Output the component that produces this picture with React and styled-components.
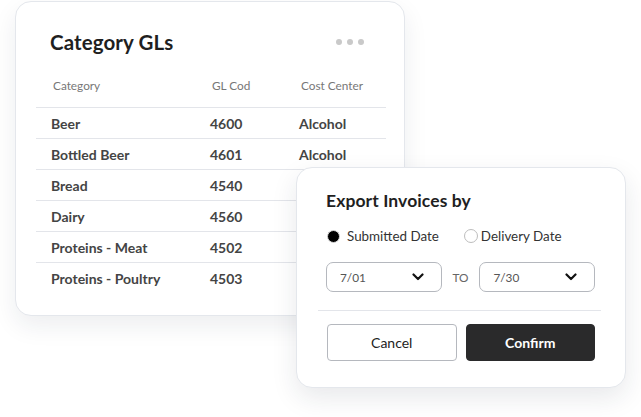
import React from "react";
import styled, { createGlobalStyle } from "styled-components";

const Global = createGlobalStyle`
  html, body { margin: 0; padding: 0; background: #ffffff; }
  body { font-family: "Lato", "Liberation Sans", sans-serif; -webkit-font-smoothing: antialiased; }
  * { box-sizing: border-box; }
`;

const Stage = styled.div`
  position: relative;
  width: 641px;
  height: 417px;
  padding: 1px 0 0 15px;
`;

const Card = styled.div`
  background: #fff;
  border: 1px solid #e4e7ec;
  border-radius: 16px;
  box-shadow: 0 10px 24px rgba(30, 40, 60, 0.08);
`;

const GLCard = styled(Card)`
  width: 390px;
  height: 315px;
  padding: 27px 0 0 0;
`;

const TitleBar = styled.div`
  display: flex;
  align-items: center;
  justify-content: space-between;
  padding: 0 40px 0 34px;
  height: 26px;
`;

const Title = styled.h2`
  margin: 0;
  font-size: ${p => p.$size || 20.5}px;
  font-weight: 700;
  color: #1f1f1f;
  letter-spacing: 0.1px;
`;

const Dots = styled.div`
  display: flex;
  gap: 5px;
`;

const Dot = styled.span`
  width: 6px;
  height: 6px;
  border-radius: 50%;
  background: #c9c9c9;
`;

const Table = styled.div`
  margin: 18px 18px 0 20px;
`;

const Row = styled.div`
  display: grid;
  grid-template-columns: 159px 89px 1fr;
  align-items: center;
  height: ${p => (p.$head ? 35 : 31)}px;
  padding-bottom: ${p => (p.$head ? 10 : 0)}px;
  border-bottom: ${p => (p.$last ? "none" : "1px solid #e3e5ea")};
`;

const Cell = styled.div`
  padding-left: ${p => (p.$head ? 17 : 15)}px;
  font-size: ${p => (p.$head ? 11.8 : 14)}px;
  font-weight: ${p => (p.$head ? 400 : 700)};
  color: ${p => (p.$head ? "#777" : "#444")};
  white-space: nowrap;
`;

const ExportCard = styled(Card)`
  position: absolute;
  left: 296px;
  top: 167px;
  width: 330px;
  height: 221px;
  padding: 22px 0 0 0;
  box-shadow: 0 10px 26px rgba(30, 40, 60, 0.1);
`;

const Inner = styled.div`
  padding: 0 30px 0 29px;
`;

const RadioRow = styled.div`
  display: flex;
  align-items: center;
  margin-top: 16px;
  height: 18px;
  padding-left: 1px;
`;

const RadioOption = styled.label`
  display: flex;
  align-items: center;
  gap: ${p => p.$gap}px;
  margin-right: ${p => p.$mr || 0}px;
  font-size: 13.4px;
  color: #333;
`;

const RadioDot = styled.span`
  width: ${p => (p.$on ? 13 : 14)}px;
  height: ${p => (p.$on ? 13 : 14)}px;
  border-radius: 50%;
  border: ${p => (p.$on ? "1.5px solid #d8d8d8" : "1px solid #bdbdbd")};
  background: ${p => (p.$on ? "#000" : "#fff")};
  box-shadow: ${p => (p.$on ? "inset 0 0 0 0.5px #000" : "none")};
`;

const Range = styled.div`
  display: flex;
  align-items: center;
  margin-top: 17px;
`;

const Select = styled.div`
  width: 116px;
  height: 30px;
  border: 1px solid #b5b8be;
  border-radius: 7px;
  display: flex;
  align-items: center;
  justify-content: space-between;
  padding: 0 17px 0 13px;
  font-size: 11.8px;
  color: #555;
`;

const To = styled.span`
  width: 38px;
  text-align: center;
  font-size: 11.8px;
  color: #666;
`;

const Divider = styled.div`
  height: 1px;
  background: #e3e5ea;
  margin: 18px 24px 0 21px;
`;

const Buttons = styled.div`
  display: flex;
  gap: 9px;
  margin-top: 13px;
  padding-left: 1px;
`;

const Button = styled.button`
  width: 131px;
  height: 37px;
  border-radius: 4px;
  font-family: inherit;
  font-size: 14px;
  font-weight: ${p => (p.$primary ? 700 : 400)};
  color: ${p => (p.$primary ? "#fff" : "#222")};
  background: ${p => (p.$primary ? "#2a2a2b" : "#fff")};
  border: 1px solid ${p => (p.$primary ? "#2a2a2b" : "#b5b8be")};
`;

const Chevron = () => (
  <svg width="12" height="8" viewBox="0 0 12 8" fill="none">
    <path d="M1.5 1.5 L6 6 L10.5 1.5" stroke="#111" strokeWidth="2.2" strokeLinecap="round" strokeLinejoin="round" />
  </svg>
);

const rows = [
  ["Beer", "4600", "Alcohol"],
  ["Bottled Beer", "4601", "Alcohol"],
  ["Bread", "4540", ""],
  ["Dairy", "4560", ""],
  ["Proteins - Meat", "4502", ""],
  ["Proteins - Poultry", "4503", ""],
];

export default function App() {
  return (
    <>
      <Global />
      <Stage>
        <GLCard>
          <TitleBar>
            <Title>Category GLs</Title>
            <Dots>
              <Dot />
              <Dot />
              <Dot />
            </Dots>
          </TitleBar>
          <Table>
            <Row $head>
              <Cell $head>Category</Cell>
              <Cell $head>GL Cod</Cell>
              <Cell $head>Cost Center</Cell>
            </Row>
            {rows.map((r, i) => (
              <Row key={r[0]} $last={i === rows.length - 1}>
                <Cell>{r[0]}</Cell>
                <Cell>{r[1]}</Cell>
                <Cell>{r[2]}</Cell>
              </Row>
            ))}
          </Table>
        </GLCard>
        <ExportCard>
          <Inner>
            <Title $size={17.5}>Export Invoices by</Title>
            <RadioRow>
              <RadioOption $gap={7} $mr={25}>
                <RadioDot $on />
                Submitted Date
              </RadioOption>
              <RadioOption $gap={3}>
                <RadioDot />
                Delivery Date
              </RadioOption>
            </RadioRow>
            <Range>
              <Select>
                7/01
                <Chevron />
              </Select>
              <To>TO</To>
              <Select>
                7/30
                <Chevron />
              </Select>
            </Range>
          </Inner>
          <Divider />
          <Inner>
            <Buttons>
              <Button>Cancel</Button>
              <Button $primary>Confirm</Button>
            </Buttons>
          </Inner>
        </ExportCard>
      </Stage>
    </>
  );
}
